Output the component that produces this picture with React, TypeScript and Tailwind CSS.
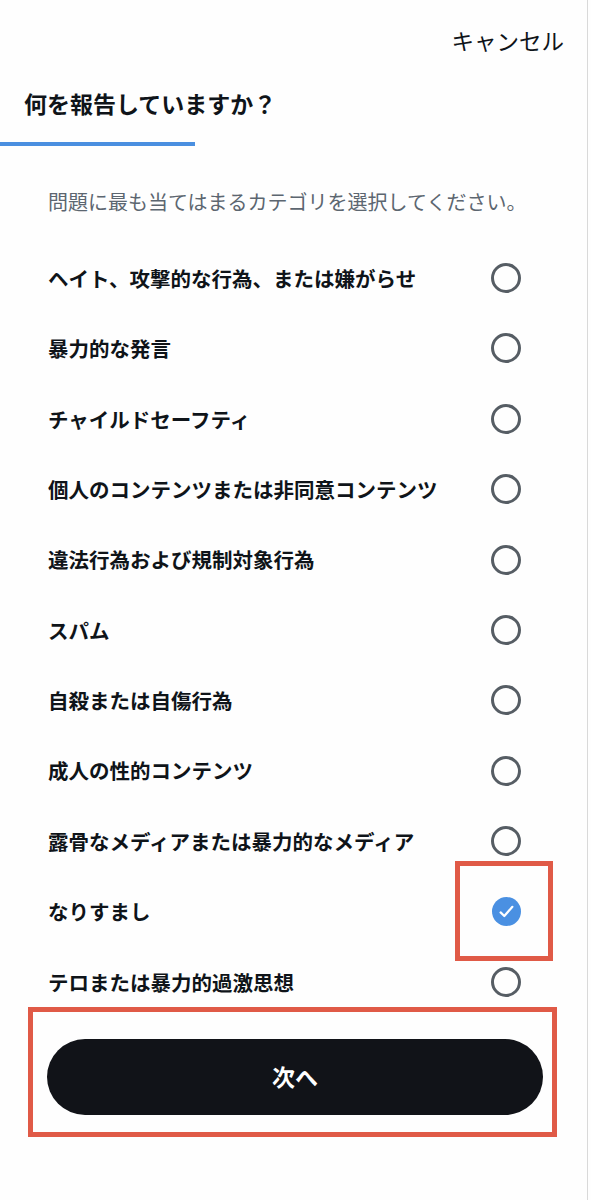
import React from "react";

const items = [
  "ヘイト、攻撃的な行為、または嫌がらせ",
  "暴力的な発言",
  "チャイルドセーフティ",
  "個人のコンテンツまたは非同意コンテンツ",
  "違法行為および規制対象行為",
  "スパム",
  "自殺または自傷行為",
  "成人の性的コンテンツ",
  "露骨なメディアまたは暴力的なメディア",
  "なりすまし",
  "テロまたは暴力的過激思想",
];

const SELECTED = 9;

export default function App() {
  return (
    <div
      className="flex min-h-[1200px] w-[591px] bg-[#fefefe] text-[#0f1419]"
      style={{ fontFamily: '"Noto Sans CJK JP", "Noto Sans", sans-serif' }}
    >
      <div className="flex w-[588px] flex-col border-r border-[#d9d9d9]">
        <div className="flex h-[80px] items-center justify-end pr-[23px]">
          <span className="text-[22.5px] leading-none">キャンセル</span>
        </div>
        <div className="mt-[2px] flex h-[42px] items-center pl-[24px]">
          <h1 className="text-[23px] font-bold leading-none">何を報告していますか？</h1>
        </div>
        <div className="mt-[18px] h-[4px] w-[195px] bg-[#4a8fe0]" />
        <div className="mt-[36px] flex h-[40px] items-center pl-[48px]">
          <p className="text-[20px] leading-none text-[#5c6670]">
            問題に最も当てはまるカテゴリを選択してください。
          </p>
        </div>
        <ul className="mt-[20.8px] flex flex-col">
          {items.map((label, i) => (
            <li
              key={label}
              className="flex h-[70.4px] items-center justify-between pl-[48px] pr-[66px]"
            >
              <span className="text-[20.5px] font-bold leading-none">{label}</span>
              <span className="relative flex h-[30px] w-[30px] items-center justify-center">
                {i === SELECTED ? (
                  <>
                    <span className="flex h-[29px] w-[29px] items-center justify-center rounded-full bg-[#4a90e2]">
                      <svg width="29" height="29" viewBox="0 0 29 29" fill="none">
                        <path
                          d="M8.6 15.4 L12.3 19 L20.4 9.8"
                          stroke="#ffffff"
                          strokeWidth="2.2"
                          strokeLinecap="round"
                          strokeLinejoin="round"
                        />
                      </svg>
                    </span>
                    <span className="pointer-events-none absolute left-[-36px] top-[-36px] h-[100px] w-[98px] border-[5px] border-[#e05a47]" />
                  </>
                ) : (
                  <span className="h-[30px] w-[30px] rounded-full border-[3px] border-[#565d64]" />
                )}
              </span>
            </li>
          ))}
        </ul>
        <div className="relative ml-[47px] mt-[21.8px] w-[496px]">
          <button className="flex h-[76px] w-full items-center justify-center rounded-full bg-[#111318] text-[23px] font-bold leading-none text-white">
            次へ
          </button>
          <span className="pointer-events-none absolute left-[-19px] top-[-32px] h-[130px] w-[529px] border-[5px] border-[#e05a47]" />
        </div>
      </div>
    </div>
  );
}
